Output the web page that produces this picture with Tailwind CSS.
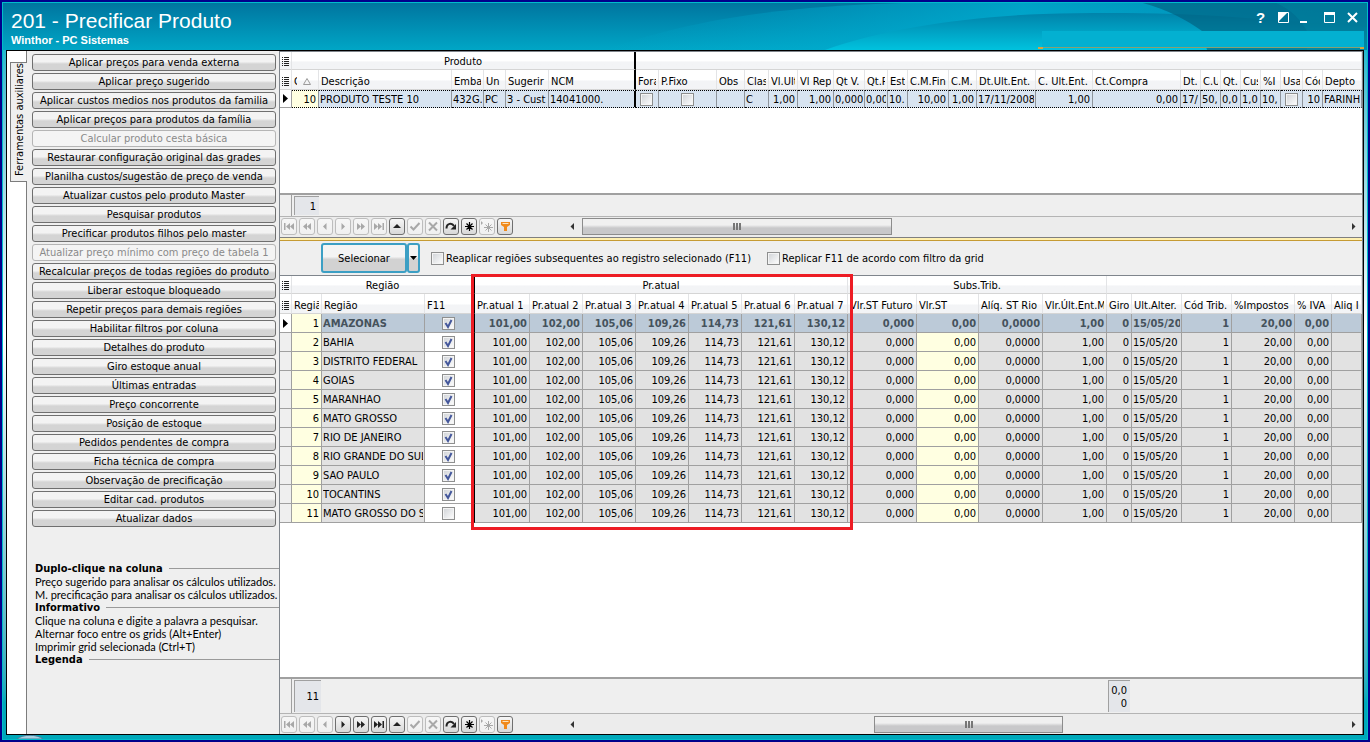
<!DOCTYPE html>
<html lang="pt-BR">
<head>
  <meta charset="UTF-8">
  <meta name="viewport" content="width=device-width, initial-scale=1.0">
  <title>201 - Precificar Produto</title>
  <script src="https://cdn.jsdelivr.net/npm/@tailwindcss/browser@4"></script>
</head>
<body class="h-screen overflow-hidden bg-[#00008b] p-[2px] text-[11px] leading-[13px] text-black font-['Tahoma','DejaVu_Sans_Condensed','Noto_Sans',sans-serif]">
  <!-- Janela -->
  <div class="relative flex h-full flex-col overflow-hidden border border-[#00bccb] bg-linear-to-b from-[#00b4cc] from-5% via-white via-45% to-[#00a8ba] to-95% px-[3px] pb-[4px]">

    <!-- Barra de titulo -->
    <svg class="absolute top-0 left-0 h-[47px] w-full" viewBox="0 0 1364 47" preserveAspectRatio="xMaxYMin slice" aria-hidden="true">
      <defs>
        <linearGradient id="sky" x1="0" y1="0" x2="0" y2="1">
          <stop offset="0" stop-color="#00759f"/>
          <stop offset="1" stop-color="#00a6c6"/>
        </linearGradient>
        <linearGradient id="band" x1="0" y1="0" x2="1" y2="0">
          <stop offset="0" stop-color="#00b0d4" stop-opacity="0"/>
          <stop offset=".55" stop-color="#00b0d4" stop-opacity=".75"/>
          <stop offset="1" stop-color="#0098bf" stop-opacity=".6"/>
        </linearGradient>
        <linearGradient id="hill" x1="0" y1="0" x2="0" y2="1">
          <stop offset="0" stop-color="#0083aa"/>
          <stop offset=".5" stop-color="#00a2c4"/>
          <stop offset="1" stop-color="#00c2de"/>
        </linearGradient>
      </defs>
      <rect width="1364" height="47" fill="url(#sky)"/>
      <path d="M600 47C680 20 760 4 900 0H1364V47Z" fill="url(#band)"/>
      <path d="M822 47C880 26 960 14 1040 11C1110 9 1170 10 1230 14L1364 24V47Z" fill="url(#hill)"/>
      <path d="M1140 0C1165 7 1184 17 1199 28L1204 47H1364V0Z" fill="#005b7a" fill-opacity=".6"/>
      <path d="M1273 0C1289 7 1298 17 1304 28V47H1364V0Z" fill="#00a0b8" fill-opacity=".2"/>
    </svg>
    <header class="relative flex h-[47px] shrink-0 justify-between pl-[5px] font-['Liberation_Sans',Arial,sans-serif] text-white">
      <div class="pt-[6px]">
        <h1 class="text-[21px] leading-6">201 - Precificar Produto</h1>
        <p class="text-[11px] leading-[14px] font-bold">Winthor - PC Sistemas</p>
      </div>
      <div class="flex w-[326px] flex-col">
        <div class="flex h-[28px] items-center justify-end gap-[8px] pr-[4px]">
          <button class="size-[15px] text-[15px] leading-[15px] font-bold" aria-label="Ajuda">?</button>
          <button class="size-[15px]" aria-label="Esconder"><svg viewBox="0 0 15 15" class="size-[15px]"><path d="M2.5 2.5h10v10h-10z" fill="none" stroke="#fff"/><path d="M2 2h10L2 12z" fill="#fff"/></svg></button>
          <button class="size-[15px]" aria-label="Minimizar"><svg viewBox="0 0 15 15" class="size-[15px]"><path d="M1 11h7v2H1z" fill="#fff"/></svg></button>
          <button class="size-[15px]" aria-label="Maximizar"><svg viewBox="0 0 15 15" class="size-[15px]"><path d="M2.5 3h10v9.500h-10z" fill="none" stroke="#fff"/><path d="M2 2h11v3H2z" fill="#fff"/></svg></button>
          <button class="size-[15px]" aria-label="Fechar"><svg viewBox="0 0 15 15" class="size-[15px]"><path d="M3 3l9 9M12 3l-9 9" stroke="#fff" stroke-width="2"/></svg></button>
        </div>
        <div class="ml-[4px] h-[16px] bg-[#03b0d1]"></div>
        <div class="flex h-[2px]">
          <div class="w-[5px] bg-[#d9a43c]"></div>
          <div class="h-px flex-1 bg-[#8aa070]"></div>
          <div class="w-[4px] bg-[#d9a43c]"></div>
        </div>
      </div>
    </header>

    <main class="flex min-h-0 flex-1 border border-black bg-white">
      <!-- Aba vertical -->
      <div class="w-[20px] shrink-0 border-r border-[#7c7c7c] pt-[11px] pl-[3px]">
        <button class="-mr-px h-[120px] w-[17px] border border-r-0 border-[#7c7c7c] bg-[#efefef] leading-[15px]">
          <span class="rotate-180 whitespace-nowrap [writing-mode:vertical-rl]">Ferramentas auxiliares</span>
        </button>
      </div>

      <!-- Ferramentas -->
      <aside class="flex w-[252px] shrink-0 flex-col bg-[#efefef]">
        <nav id="tools" class="flex flex-col gap-[2px] pt-[3px] pr-[3px] pl-[5px]"></nav>
        <div class="mt-[35px] pl-[8px] whitespace-nowrap">
          <div class="flex items-center gap-[6px]"><h2 class="font-bold">Duplo-clique na coluna</h2><div class="h-px flex-1 bg-[#9a9a9a]"></div></div>
          <div class="font-['Tahoma','Lato',sans-serif]">
            <p>Preço sugerido para analisar os cálculos utilizados.</p>
            <p>M. precificação para analisar os cálculos utilizados.</p>
          </div>
          <div class="flex items-center gap-[6px]"><h2 class="font-bold">Informativo</h2><div class="h-px flex-1 bg-[#9a9a9a]"></div></div>
          <div class="font-['Tahoma','Lato',sans-serif]">
            <p>Clique na coluna e digite a palavra a pesquisar.</p>
            <p>Alternar foco entre os grids (Alt+Enter)</p>
            <p>Imprimir grid selecionada (Ctrl+T)</p>
          </div>
          <div class="flex items-center gap-[6px]"><h2 class="font-bold">Legenda</h2><div class="h-px flex-1 bg-[#9a9a9a]"></div></div>
        </div>
      </aside>

      <div class="flex min-w-0 flex-1 flex-col border-t border-r border-l border-[#7f858c]">
        <!-- Grid de produtos -->
        <section class="h-[141px] shrink-0 overflow-hidden">
          <table id="products" class="w-full table-fixed border-separate border-spacing-0"></table>
        </section>
        <div class="flex h-[24px] shrink-0 border-t-2 border-b border-t-[#a0a0a0] border-b-[#b4b4b4] bg-[#efefef]">
          <div class="w-[12px] border-r border-[#a0a0a0]"></div>
          <div class="mt-px ml-[2px] h-[19px] w-[25px] border-t border-l border-[#a0a0a0] bg-[#e4e6ea] pr-[3px] text-right leading-[20px]">1</div>
        </div>
        <div class="flex h-[20px] shrink-0 items-start bg-[#ececec] pt-px pl-px">
          <div class="nav-bar flex w-[283px] shrink-0 gap-[2px]" data-enabled="6,9,10,12"></div>
          <button class="w-[18px]" aria-label="Rolar para a esquerda"><svg viewBox="0 0 18 17" class="h-[17px] w-[18px]"><path d="M10 5v7L6.500 8.500z" fill="#333"/></svg></button>
          <div class="flex h-[17px] w-[310px] items-center justify-center gap-px border border-[#8c8c8c] bg-linear-to-b from-[#f0f0f0] from-40% to-[#c8c8ca] to-60%">
            <i class="h-[7px] w-[2px] bg-[#777]"></i><i class="h-[7px] w-[2px] bg-[#777]"></i><i class="h-[7px] w-[2px] bg-[#777]"></i>
          </div>
          <button class="ml-auto w-[18px]" aria-label="Rolar para a direita"><svg viewBox="0 0 18 17" class="h-[17px] w-[18px]"><path d="M8 5v7l3.500-3.500z" fill="#333"/></svg></button>
        </div>

        <!-- Divisor -->
        <div class="h-[4px] shrink-0 border-t border-b border-t-[#7f7f7f] border-b-[#c69b33] bg-[#fff0b0]"></div>

        <div class="flex h-[34px] shrink-0 items-center bg-[#efefef] pl-[41px]">
          <button class="h-[30px] w-[86px] rounded-[3px] border-2 border-[#3c9fc4] bg-linear-to-b from-[#f4f4f4] from-45% to-[#d2d2d2] to-55%">Selecionar</button>
          <button class="flex h-[30px] w-[13px] items-center justify-center rounded-[3px] border-2 border-[#3c9fc4] bg-linear-to-b from-[#f4f4f4] from-45% to-[#d2d2d2] to-55%" aria-label="Opções"><svg viewBox="0 0 7 4" class="h-[4px] w-[7px] shrink-0"><path d="M0 0h7L3.500 4z"/></svg></button>
          <label class="ml-[11px] flex w-[336px] items-center gap-[2px] whitespace-nowrap"><input type="checkbox" class="size-[13px] appearance-none border border-[#8e8f8f] bg-linear-to-br from-[#cfd2d6] to-white shadow-[inset_0_0_0_1px_#f4f4f4]">Reaplicar regiões subsequentes ao registro selecionado (F11)</label>
          <label class="flex items-center gap-[2px] whitespace-nowrap"><input type="checkbox" class="size-[13px] appearance-none border border-[#8e8f8f] bg-linear-to-br from-[#cfd2d6] to-white shadow-[inset_0_0_0_1px_#f4f4f4]">Replicar F11 de acordo com filtro da grid</label>
        </div>

        <!-- Grid de regioes -->
        <section class="relative min-h-0 flex-1 border-t border-[#7f858c]">
          <table id="regions" class="w-full table-fixed border-separate border-spacing-0"></table>
          <div class="pointer-events-none absolute -top-[2px] left-[191px] h-[256px] w-[382px] border-3 border-[#ed1c24]"></div>
        </section>
        <div class="flex h-[37px] shrink-0 border-t-2 border-b border-t-[#a0a0a0] border-b-[#b4b4b4] bg-[#efefef]">
          <div class="w-[12px] border-r border-[#a0a0a0]"></div>
          <div class="mt-px ml-[2px] flex h-[32px] w-[27px] items-center justify-end border-t border-l border-[#a0a0a0] bg-[#e4e6ea] pr-[2px]">11</div>
          <div class="mt-px ml-[787px] h-[32px] w-[22px] border-t border-l border-[#a0a0a0] bg-[#e4e6ea] pt-[3px] pr-[3px] text-right">0,0<br>0</div>
        </div>
        <div class="flex h-[20px] shrink-0 items-center bg-[#ececec] pl-px">
          <div class="nav-bar flex w-[283px] shrink-0 gap-[2px]" data-enabled="3,4,5,6,9,10,12"></div>
          <button class="w-[18px]" aria-label="Rolar para a esquerda"><svg viewBox="0 0 18 17" class="h-[17px] w-[18px]"><path d="M10 5v7L6.500 8.500z" fill="#333"/></svg></button>
          <div class="ml-[292px] flex h-[17px] w-[189px] items-center justify-center gap-px border border-[#8c8c8c] bg-linear-to-b from-[#f0f0f0] from-40% to-[#c8c8ca] to-60%">
            <i class="h-[7px] w-[2px] bg-[#777]"></i><i class="h-[7px] w-[2px] bg-[#777]"></i><i class="h-[7px] w-[2px] bg-[#777]"></i>
          </div>
          <button class="ml-auto w-[18px]" aria-label="Rolar para a direita"><svg viewBox="0 0 18 17" class="h-[17px] w-[18px]"><path d="M8 5v7l3.500-3.500z" fill="#333"/></svg></button>
        </div>
      </div>
    </main>
    <svg class="absolute bottom-0 left-[14px] h-[4px] w-[26px]" viewBox="0 0 26 4" aria-hidden="true"><path d="M0 4C6-1 20-1 26 4Z" fill="#a9cfe0" stroke="#3f7f9c"/></svg>
  </div>

  <script>
    // Botoes da barra lateral; [texto, desabilitado]
    const tools = [
      ['Aplicar preços para venda externa'], ['Aplicar preço sugerido'],
      ['Aplicar custos medios nos produtos da familia'], ['Aplicar preços para produtos da família'],
      ['Calcular produto cesta básica', true], ['Restaurar configuração original das grades'],
      ['Planilha custos/sugestão de preço de venda'], ['Atualizar custos pelo produto Master'],
      ['Pesquisar produtos'], ['Precificar produtos filhos pelo master'],
      ['Atualizar preço mínimo com preço de tabela 1', true], ['Recalcular preços de todas regiões do produto'],
      ['Liberar estoque bloqueado'], ['Repetir preços para demais regiões'], ['Habilitar filtros por coluna'],
      ['Detalhes do produto'], ['Giro estoque anual'], ['Últimas entradas'], ['Preço concorrente'],
      ['Posição de estoque'], ['Pedidos pendentes de compra'], ['Ficha técnica de compra'],
      ['Observação de precificação'], ['Editar cad. produtos'], ['Atualizar dados']
    ];
    document.getElementById('tools').innerHTML = tools.map(([text, off]) =>
      `<button ${off ? 'disabled' : ''} class="h-[17px] rounded-[3px] border border-[#6f6f6f] bg-linear-to-b from-[#f3f3f3] from-45% to-[#d4d4d4] to-60% leading-[15px] whitespace-nowrap disabled:border-[#b5b5b5] disabled:from-[#f4f4f4] disabled:to-[#f4f4f4] disabled:text-[#8a8a8a]">${text}</button>`
    ).join('');

    // Navegador dos grids
    const icons = [
      ['Primeiro', '<path d="M3 5h1.500v7H3zM9 5v7L5 8.500zM13 5v7L9 8.500z"/>'],
      ['Página anterior', '<path d="M8 5v7L4 8.500zM12 5v7L8 8.500z"/>'],
      ['Anterior', '<path d="M9.500 5v7L6 8.500z"/>'],
      ['Próximo', '<path d="M6.500 5v7L10 8.500z"/>'],
      ['Próxima página', '<path d="M4 5v7l4-3.500zM8 5v7l4-3.500z"/>'],
      ['Último', '<path d="M3 5v7l4-3.500zM7 5v7l4-3.500zM11.500 5H13v7h-1.500z"/>'],
      ['Editar', '<path d="M4 10h8L8 6z"/>'],
      ['Gravar', '<path d="M3.500 8.500l3 3L12.500 5" fill="none" stroke="currentColor" stroke-width="2"/>'],
      ['Cancelar', '<path d="M4 4.500l8 8M12 4.500l-8 8" fill="none" stroke="currentColor" stroke-width="2"/>'],
      ['Atualizar', '<path d="M3.500 10.500C3.500 5 9 4.500 11 8" fill="none" stroke="currentColor" stroke-width="2"/><path d="M13 6v5.500H7.500z"/>'],
      ['Marcar', '<path d="M8.500 4v9M4 8.500h9M5.500 5.500l6 6M11.500 5.500l-6 6" stroke="#000" stroke-width="1.200" fill="none"/>'],
      ['Ir para marca', '<path d="M2 3v4l2-2z"/><path d="M9.500 5v9M5 9.500h9M6.500 6.500l6 6M12.500 6.500l-6 6" stroke="currentColor" fill="none"/>'],
      ['Filtrar', '<path d="M4 4h9v3l-3 2v4H7V9L4 7z" fill="#f08a1c"/><path d="M5.500 5h6v1h-6z" fill="#fde3bd"/>']
    ];
    document.querySelectorAll('.nav-bar').forEach(bar => {
      const on = bar.dataset.enabled.split(',').map(Number);
      bar.innerHTML = icons.map(([name, shape], i) =>
        `<button ${on.includes(i) ? '' : 'disabled'} aria-label="${name}" class="h-[17px] w-[16px] rounded-[3px] border border-[#6f6f6f] bg-linear-to-b from-[#f6f6f6] to-[#d8d8d8] text-[#222] disabled:border-[#bdbdbd] disabled:from-[#f6f6f6] disabled:to-[#f0f0f0] disabled:text-[#a8a8a8]"><svg viewBox="1 1 14 15" class="h-[15px] w-[14px] fill-current">${shape}</svg></button>`
      ).join('');
    });

    const check = (label, checked) => `<span class="inline-grid align-top">
      <input type="checkbox" aria-label="${label}" ${checked ? 'checked' : ''} class="peer col-start-1 row-start-1 size-[13px] appearance-none border border-[#8e8f8f] bg-linear-to-br from-[#cfd2d6] to-white shadow-[inset_0_0_0_1px_#f4f4f4]">
      <svg viewBox="0 0 13 13" class="pointer-events-none invisible col-start-1 row-start-1 size-[13px] peer-checked:visible"><path d="M3.500 6l2.500 4L9.500 3" fill="none" stroke="#44579b" stroke-width="2"/></svg></span>`;
    const menu = '<svg viewBox="0 0 7 9" class="mx-auto h-[9px] w-[7px]"><path d="M0 .5h1M2 .5h5M0 2.500h1M2 2.500h5M0 4.500h1M2 4.500h5M0 6.500h1M2 6.500h5M0 8.500h1M2 8.500h5" stroke="#222"/></svg>';
    const pointer = '<svg viewBox="0 0 5 9" class="mx-auto h-[9px] w-[5px]"><path d="M0 0v9l5-4.500z"/></svg>';

    const colgroup = cols => '<colgroup><col style="width:12px">' +
      cols.map((c, i) => i < cols.length - 1 ? `<col style="width:${c[1]}px">` : '<col>').join('') + '</colgroup>';

    const headCell = (html, extra) =>
      `<th class="h-[20px] border-r border-b border-r-[#e3e4e6] border-b-[#d5d5d5] bg-linear-to-b from-white from-50% to-[#f3f4f6] to-60% pt-[3px] pr-[2px] pb-0 pl-[2px] text-left font-normal whitespace-nowrap ${extra}"><div class="overflow-hidden">${html}</div></th>`;
    const band = (text, span, extra) =>
      `<th colspan="${span}" class="h-[18px] border-r border-b border-r-[#e3e4e6] border-b-[#d5d5d5] bg-linear-to-b from-white from-50% to-[#f3f4f6] to-60% px-0 pt-[2px] pb-0 text-center font-normal ${extra}">${text}</th>`;

    // [titulo, largura, valor, alinhamento]
    const productCols = [
      ['C', 27, '10', 'r'], ['Descrição', 133, 'PRODUTO TESTE 10'], ['Embal', 32, '432G.'], ['Un', 22, 'PC'],
      ['Sugerir', 43, '3 - Cust'], ['NCM', 87, '14041000.'], ['Fora', 23, 'check'], ['P.Fixo', 58, 'check'],
      ['Obs', 28, ''], ['Clas', 24, 'C'], ['Vl.Ult', 29, '1,00', 'r'], ['Vl Rep', 36, '1,00', 'r'],
      ['Qt V.', 31, '0,000'], ['Qt.P', 23, '0,00'], ['Est', 20, '10.'], ['C.M.Fin', 41, '10,00', 'r'],
      ['C.M.', 28, '1,00', 'r'], ['Dt.Ult.Ent.', 59, '17/11/2008'], ['C. Ult.Ent.', 57, '1,00', 'r'],
      ['Ct.Compra', 88, '0,00', 'r'], ['Dt.', 20, '17/'], ['C.U', 20, '50,'], ['Qt.', 20, '0,0'], ['Cus', 20, '1,0'],
      ['%I', 20, '10,'], ['Usa', 22, 'check'], ['Cód', 20, '10', 'r'], ['Depto', 40, 'FARINHAS']
    ];
    document.getElementById('products').innerHTML = colgroup(productCols) +
      `<thead><tr>${band(menu, 1, '')}${band('Produto', 6, 'border-r-2 border-r-black')}${band('', 22, '')}</tr><tr>` +
      headCell(menu, '') +
      productCols.map(([title], i) => {
        if (i === 0) return headCell('<span class="flex items-center gap-[6px]"><span class="w-[3px] overflow-hidden">C</span><svg viewBox="0 0 8 7" class="h-[7px] w-[8px]"><path d="M.5 6.500h7L4 .5z" fill="none" stroke="#9a9a9a"/></svg></span>', '');
        return headCell(title, i === 5 ? 'border-r-2 border-r-black' : '');
      }).join('') +
      '</tr></thead><tbody><tr>' + `<td class="h-[18px] border-r border-b border-[#a0a0a0] p-0">${pointer}</td>` +
      productCols.map(([title, , value, align], i) =>
        `<td class="h-[18px] border-y border-r border-y-black border-r-[#8f959c] [border-top-style:dotted] [border-bottom-style:dotted] px-px whitespace-nowrap ${i === 5 ? 'border-r-2 border-r-black' : ''} ${i === 0 ? 'bg-[#ffffe1]' : 'bg-[#d8e4f1]'} ${value === 'check' ? 'text-center' : align === 'r' ? 'text-right' : ''}"><div class="overflow-hidden pr-px">${value === 'check' ? check(title, false) : value}</div></td>`
      ).join('') + '</tr></tbody>';

    const regionCols = [
      ['Região', 30], ['Região', 103], ['F11', 50], ['Pr.atual 1', 55], ['Pr.atual 2', 53], ['Pr.atual 3', 53],
      ['Pr.atual 4', 53], ['Pr.atual 5', 53], ['Pr.atual 6', 53], ['Pr.atual 7', 53], ['Vlr.ST Futuro', 69],
      ['Vlr.ST', 62], ['Alíq. ST Rio N', 64], ['Vlr.Últ.Ent.M', 64], ['Giro', 25], ['Ult.Alter.', 50],
      ['Cód Trib.', 50], ['%Impostos', 63], ['% IVA', 37], ['Aliq ICMS', 30]
    ];
    const regions = ['AMAZONAS', 'BAHIA', 'DISTRITO FEDERAL', 'GOIAS', 'MARANHAO', 'MATO GROSSO', 'RIO DE JANEIRO',
      'RIO GRANDE DO SUL', 'SAO PAULO', 'TOCANTINS', 'MATO GROSSO DO SUL'];
    const prices = ['101,00', '102,00', '105,06', '109,26', '114,73', '121,61', '130,12',
      '0,000', '0,00', '0,0000', '1,00', '0', '15/05/20', '1', '20,00', '0,00', ''];

    document.getElementById('regions').innerHTML = colgroup(regionCols) +
      `<thead><tr>${band(menu, 1, '')}${band('Região', 3, 'border-r-2 border-r-black')}${band('Pr.atual', 7, '')}${band('Subs.Trib.', 4, '')}${band('', 6, '')}</tr><tr>` +
      headCell(menu, '') + regionCols.map(([title], i) => headCell(title, i === 2 ? 'border-r-2 border-r-black' : '')).join('') +
      '</tr></thead><tbody>' +
      regions.map((name, r) => {
        const values = [r + 1, name, check('F11 ' + name, r < 10), ...prices];
        return `<tr class="${r === 0 ? 'text-[#45525c]' : ''}"><td class="h-[19px] border-r border-b border-[#a0a0a0] p-0 ${r === 0 ? 'bg-white' : 'bg-[#efefef]'}">${r === 0 ? pointer : ''}</td>` +
          values.map((v, i) => {
            let bg = r === 0 ? 'bg-[#bccad8]' : 'bg-[#e2e2e2]';
            if (i === 0 || (i === 11 && r > 0)) bg = 'bg-[#ffffe1]';
            if (i === 2 && r > 0) bg = 'bg-white';
            const align = i === 2 ? 'text-center' : i === 1 || i === 15 ? 'text-left' : 'text-right';
            const weight = r === 0 && i > 0 ? 'font-bold' : 'text-black';
            return `<td class="h-[19px] border-r border-b border-[#a0a0a0] px-px whitespace-nowrap ${i === 2 ? 'border-r-2 border-r-black' : ''} ${bg} ${align} ${weight}"><div class="overflow-hidden pr-px">${v}</div></td>`;
          }).join('') + '</tr>';
      }).join('') + '</tbody>';
  </script>
</body>
</html>
